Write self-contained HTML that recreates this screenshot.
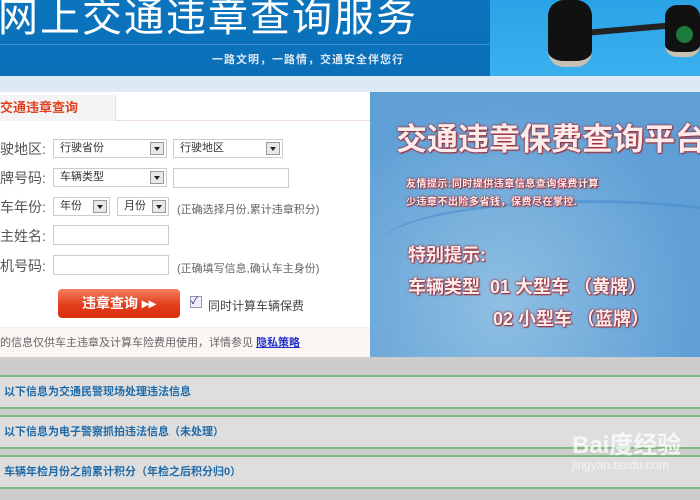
<!DOCTYPE html>
<html><head><meta charset="utf-8"><style>
*{margin:0;padding:0;box-sizing:border-box}
body{width:700px;height:500px;overflow:hidden;background:#cdcdcd;font-family:"Liberation Sans","Noto Sans CJK SC",sans-serif;position:relative}
.a{position:absolute}
.sel{position:absolute;height:19px;border:1px solid #ccc;background:#fff;font-size:11px;color:#333;line-height:17px;padding-left:6px}
.sel i{position:absolute;right:2px;top:2px;width:14px;height:13px;border:1px solid #999;background:#e8e8e8}
.sel i:after{content:"";position:absolute;left:3px;top:4px;border:3px solid transparent;border-top:4px solid #222}
.inp{position:absolute;height:20px;border:1px solid #ccc;background:#fff}
.lbl{position:absolute;left:0;font-size:14px;color:#555}
.note{position:absolute;font-size:11px;color:#666}
.row{position:absolute;left:0;width:700px;height:34px;background:#dedede;border-top:2px solid #7dba7d;border-bottom:2px solid #7dba7d;font-size:11px;font-weight:bold;color:#1f6aa8;line-height:30px;padding-left:4px}
.rt{position:absolute;color:#fbecec;font-weight:bold;text-shadow:0 0 2px #a0303a,0 0 2px #a0303a,1px 1px 1px #a0303a;white-space:nowrap}
</style></head><body>
<div class="a" style="left:0;top:0;width:490px;height:76px;background:linear-gradient(#0b74bd,#0a6fb8)"></div>
<div class="a" style="left:0;top:44px;width:490px;height:1px;background:#3b8fcb"></div>
<div class="a" style="left:-2px;top:-4px;font-size:40px;color:#fff;letter-spacing:2px;line-height:44px">网上交通违章查询服务</div>
<div class="a" style="left:212px;top:51px;font-size:11px;color:#dde9f5;font-weight:bold;letter-spacing:1px">一路文明，一路情，交通安全伴您行</div>
<div class="a" style="left:490px;top:0;width:210px;height:76px;background:linear-gradient(#2aa3e6,#3bb0ef)"></div>
<div class="a" style="left:590px;top:26px;width:80px;height:6px;background:#222;transform:rotate(-5deg)"></div>
<div class="a" style="left:548px;top:0;width:44px;height:67px;background:#111;border-radius:16px;border-bottom:6px solid #c8c0b0"></div>
<div class="a" style="left:665px;top:5px;width:35px;height:52px;background:#111;border-radius:12px;border-bottom:5px solid #c8c0b0"></div>
<div class="a" style="left:676px;top:26px;width:17px;height:17px;background:#1c7a3a;border-radius:50%"></div>
<div class="a" style="left:0;top:76px;width:700px;height:16px;background:#dde9f5"></div>

<div class="a" style="left:0;top:92px;width:370px;height:265px;background:#fff"></div>
<div class="a" style="left:0;top:95px;width:116px;height:26px;background:#f4f4f4;border-right:1px solid #e4e4e4;font-size:13px;color:#e04020;font-weight:bold;line-height:26px">交通违章查询</div>
<div class="a" style="left:116px;top:120px;width:254px;height:1px;background:#f0dede"></div>
<div class="lbl" style="top:139px">驶地区:</div>
<div class="sel" style="left:53px;top:139px;width:114px">行驶省份<i></i></div>
<div class="sel" style="left:173px;top:139px;width:110px">行驶地区<i></i></div>
<div class="lbl" style="top:168px">牌号码:</div>
<div class="sel" style="left:53px;top:168px;width:114px">车辆类型<i></i></div>
<div class="inp" style="left:173px;top:168px;width:116px"></div>
<div class="lbl" style="top:197px">车年份:</div>
<div class="sel" style="left:53px;top:197px;width:57px">年份<i></i></div>
<div class="sel" style="left:117px;top:197px;width:52px">月份<i></i></div>
<div class="note" style="left:177px;top:201px">(正确选择月份,累计违章积分)</div>
<div class="lbl" style="top:226px">主姓名:</div>
<div class="inp" style="left:53px;top:225px;width:116px"></div>
<div class="lbl" style="top:256px">机号码:</div>
<div class="inp" style="left:53px;top:255px;width:116px"></div>
<div class="note" style="left:177px;top:260px">(正确填写信息,确认车主身份)</div>
<div class="a" style="left:58px;top:289px;width:122px;height:29px;border-radius:4px;background:linear-gradient(#f47e62,#e23d1b 55%,#d9300f);color:#fff;font-size:14px;font-weight:bold;text-align:center;line-height:29px">违章查询 ▸▸</div>
<div class="a" style="left:190px;top:296px;width:12px;height:12px;border:1px solid #99a;background:#eef;font-size:10px;line-height:10px;color:#226">✓</div>
<div class="a" style="left:208px;top:297px;font-size:12px;color:#444">同时计算车辆保费</div>
<div class="a" style="left:0;top:327px;width:370px;height:30px;background:#fbf6f4;border-top:1px solid #eee;font-size:11px;color:#666;line-height:30px">的信息仅供车主违章及计算车险费用使用，详情参见 <span style="color:#2233cc;text-decoration:underline;font-weight:bold">隐私策略</span></div>

<div class="a" style="left:370px;top:92px;width:330px;height:265px;background:radial-gradient(ellipse at 40% 80%,#8fbfe2,#5f9fd6 70%)"></div>
<div class="a" style="left:380px;top:200px;width:420px;height:90px;border-top:3px solid #4b8ccc;border-radius:50%;opacity:.6"></div>
<div class="rt" style="left:396px;top:114px;font-size:31px">交通违章保费查询平台</div>
<div class="rt" style="left:406px;top:176px;font-size:10px;line-height:18px;letter-spacing:.5px">友情提示:同时提供违章信息查询保费计算<br>少违章不出险多省钱，保费尽在掌控.</div>
<div class="rt" style="left:408px;top:239px;font-size:18px;line-height:32px">特别提示:<br>车辆类型 &nbsp;01 大型车 （黄牌）<br><span style="padding-left:85px">02 小型车 （蓝牌）</span></div>

<div class="row" style="top:375px">以下信息为交通民警现场处理违法信息</div>
<div class="row" style="top:415px">以下信息为电子警察抓拍违法信息（未处理）</div>
<div class="row" style="top:455px">车辆年检月份之前累计积分（年检之后积分归0）</div>
<div class="a" style="left:572px;top:425px;font-size:24px;color:rgba(255,255,255,.75);font-weight:bold">Bai度经验</div>
<div class="a" style="left:572px;top:458px;font-size:12px;color:rgba(255,255,255,.7)">jingyan.baidu.com</div>
</body></html>
